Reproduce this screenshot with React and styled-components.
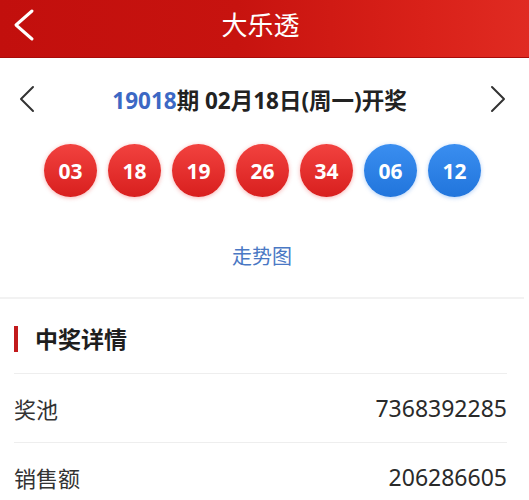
import styled, { createGlobalStyle } from 'styled-components';

const GlobalStyle = createGlobalStyle`
  body {
    margin: 0;
    background: #ffffff;
    font-family: "Noto Sans", "Noto Sans CJK SC", sans-serif;
  }
`;

const red = ['03', '18', '19', '26', '34'];
const blue = ['06', '12'];

const rows = [
  { label: '奖池', value: '7368392285' },
  { label: '销售额', value: '206286605' },
];

const Chevron = ({ dir = 'left', color = '#333', width = 16, height = 28, stroke = 2 }) => {
  const pts =
    dir === 'left'
      ? `${width - stroke},${stroke} ${stroke},${height / 2} ${width - stroke},${height - stroke}`
      : `${stroke},${stroke} ${width - stroke},${height / 2} ${stroke},${height - stroke}`;
  return (
    <svg width={width} height={height} viewBox={`0 0 ${width} ${height}`}>
      <polyline
        points={pts}
        fill='none'
        stroke={color}
        strokeWidth={stroke}
        strokeLinecap='round'
        strokeLinejoin='round'
      />
    </svg>
  );
};

const App = () => {
  return (
    <Page>
      <GlobalStyle />
      <Header>
        <BackButton>
          <Chevron color='#ffffff' width={22} height={34} stroke={3} />
        </BackButton>
        <Title>大乐透</Title>
        <span />
      </Header>

      <DateRow>
        <Chevron />
        <IssueText>
          <em>19018</em>期 02月18日(周一)开奖
        </IssueText>
        <Chevron dir='right' />
      </DateRow>

      <Balls>
        {red.map((n) => (
          <Ball key={'r' + n} color='red'>
            {n}
          </Ball>
        ))}
        {blue.map((n) => (
          <Ball key={'b' + n} color='blue'>
            {n}
          </Ball>
        ))}
      </Balls>

      <TrendLink>走势图</TrendLink>

      <Section>
        <SectionTitle>中奖详情</SectionTitle>
        {rows.map((row) => (
          <InfoRow key={row.label}>
            <span>{row.label}</span>
            <Value>{row.value}</Value>
          </InfoRow>
        ))}
      </Section>
    </Page>
  );
};

const Page = styled.div`
  width: 529px;
  min-height: 500px;
  overflow: hidden;
  background: #ffffff;
`;

const Header = styled.div`
  height: 58px;
  display: grid;
  grid-template-columns: 60px 1fr 60px;
  align-items: center;
  background: linear-gradient(90deg, #c20f0d 0%, #c7130f 45%, #d92119 80%, #e02b22 100%);
  border-bottom: 1px solid #a80c0a;
  box-sizing: border-box;
`;

const BackButton = styled.div`
  display: flex;
  align-items: center;
  padding-left: 13px;
  padding-bottom: 8px;
`;

const Title = styled.div`
  text-align: center;
  color: #ffffff;
  font-size: 26px;
  line-height: 1;
  margin-left: -8px;
  padding-bottom: 8px;
`;

const DateRow = styled.div`
  margin-top: 12px;
  height: 58px;
  display: flex;
  align-items: center;
  justify-content: space-between;
  padding: 0 23px 0 19px;
`;

const IssueText = styled.div`
  font-size: 22.5px;
  font-weight: 700;
  color: #222222;
  margin-left: -6px;

  em {
    font-style: normal;
    color: #3c68c4;
  }
`;

const Balls = styled.div`
  margin-top: 16px;
  display: flex;
  justify-content: center;
  gap: 11px;
  padding-right: 4px;
`;

const Ball = styled.div`
  width: 53px;
  height: 53px;
  border-radius: 50%;
  display: flex;
  align-items: center;
  justify-content: center;
  color: #ffffff;
  font-size: 21px;
  font-weight: 700;
  background: ${({ color }) =>
    color === 'red'
      ? 'linear-gradient(180deg, #f2423f 0%, #d81f1e 100%)'
      : 'linear-gradient(180deg, #3a8ef0 0%, #2175dc 100%)'};
  box-shadow: 0 1px 4px
    ${({ color }) => (color === 'red' ? 'rgba(230, 40, 40, 0.35)' : 'rgba(40, 120, 230, 0.35)')};
`;

const TrendLink = styled.div`
  padding: 46px 0 26px;
  text-align: center;
  font-size: 20px;
  line-height: 28px;
  color: #4a78c4;
  border-bottom: 2px solid #f2f2f2;
  margin-right: 5px;
`;

const Section = styled.div`
  padding: 0 22px 0 14px;
`;

const SectionTitle = styled.div`
  display: flex;
  align-items: center;
  gap: 17px;
  padding: 27px 0 21px;
  font-size: 23px;
  line-height: 26px;
  font-weight: 700;
  color: #1e1e1e;

  &::before {
    content: '';
    width: 4px;
    height: 26px;
    background: #c21a1c;
  }
`;

const InfoRow = styled.div`
  height: 68px;
  display: flex;
  align-items: center;
  justify-content: space-between;
  border-top: 1px solid #eeeeee;
  font-size: 22px;
  color: #333333;
`;

const Value = styled.span`
  font-size: 23px;
  color: #2a2a2a;
`;

export default App;
